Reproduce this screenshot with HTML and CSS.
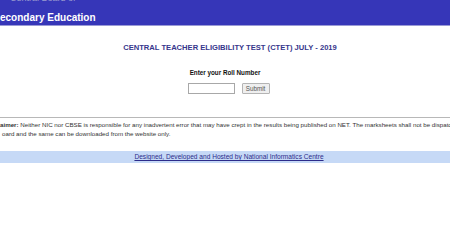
FILE: index.html
```html
<!DOCTYPE html>
<html>
<head>
<meta charset="utf-8">
<link rel="stylesheet" href="styles.css">
</head>
<body>
<div class="header">
  <div class="topline">Central Board of</div>
  <div class="brand">econdary Education</div>
</div>
<div class="main">
  <div class="exam-title">CENTRAL TEACHER ELIGIBILITY TEST (CTET) JULY - 2019</div>
  <div class="prompt">Enter your Roll Number</div>
  <div class="form-row">
    <input class="roll" type="text">
    <button class="submit" type="button">Submit</button>
  </div>
</div>
<div class="rule"></div>
<div class="disclaimer">
  <div class="dline"><b>aimer:</b> Neither NIC nor CBSE is responsible for any inadvertent error that may have crept in the results being published on NET. The marksheets shall not be dispatched by the</div>
  <div class="dline second">oard and the same can be downloaded from the website only.</div>
</div>
<div class="footer">
  <a class="credit" href="#">Designed, Developed and Hosted by National Informatics Centre</a>
</div>
</body>
</html>
```

FILE: styles.css
```css
html, body {
  margin: 0;
  padding: 0;
  background: #ffffff;
  overflow: hidden;
}
body {
  width: 450px;
  height: 250px;
  font-family: "Liberation Sans", Arial, sans-serif;
  color: #222;
}
.header {
  height: 25px;
  background: #3636b8;
  border-bottom: 1px solid #9a9ad6;
  overflow: hidden;
}
.topline {
  margin-top: -7px;
  padding-left: 10px;
  font-size: 9px;
  line-height: 10px;
  color: #9a9ad0;
  white-space: nowrap;
}
.brand {
  margin-top: 9px;
  font-size: 10px;
  line-height: 12px;
  font-weight: bold;
  color: #ffffff;
  white-space: nowrap;
}
.main {
  display: flex;
  flex-direction: column;
  align-items: center;
  padding-top: 17px;
}
.exam-title {
  font-size: 7.6px;
  line-height: 10px;
  font-weight: bold;
  color: #36368c;
  white-space: nowrap;
  margin-left: 10px;
}
.prompt {
  margin-top: 15px;
  font-size: 6.3px;
  line-height: 10px;
  font-weight: bold;
  color: #111;
  white-space: nowrap;
}
.form-row {
  margin-top: 5px;
  display: flex;
  align-items: center;
  gap: 7px;
  margin-left: 7px;
}
.roll {
  box-sizing: border-box;
  width: 47px;
  height: 11px;
  margin: 0;
  padding: 0;
  border: 1px solid #a8a8a8;
  background: #fff;
}
.submit {
  box-sizing: border-box;
  width: 28px;
  height: 11px;
  margin: 0;
  padding: 0;
  border: 1px solid #b4b4b4;
  border-radius: 1px;
  background: #efefef;
  font-family: "Liberation Sans", Arial, sans-serif;
  font-size: 6.3px;
  line-height: 9px;
  color: #555;
}
.rule {
  margin-top: 23px;
  height: 0;
  border-top: 1px solid #b8b8b8;
}
.disclaimer {
  padding-top: 3px;
  font-size: 6.2px;
  line-height: 8.5px;
  color: #333;
}
.dline {
  white-space: nowrap;
  overflow: hidden;
}
.dline.second {
  padding-left: 2px;
}
.footer {
  margin-top: 13px;
  height: 12px;
  background: #c6d9f6;
  display: flex;
  align-items: center;
  justify-content: center;
}
.credit {
  font-size: 6.6px;
  line-height: 12px;
  color: #2c2c8a;
  text-decoration: underline;
  white-space: nowrap;
  margin-left: 8px;
}
```
